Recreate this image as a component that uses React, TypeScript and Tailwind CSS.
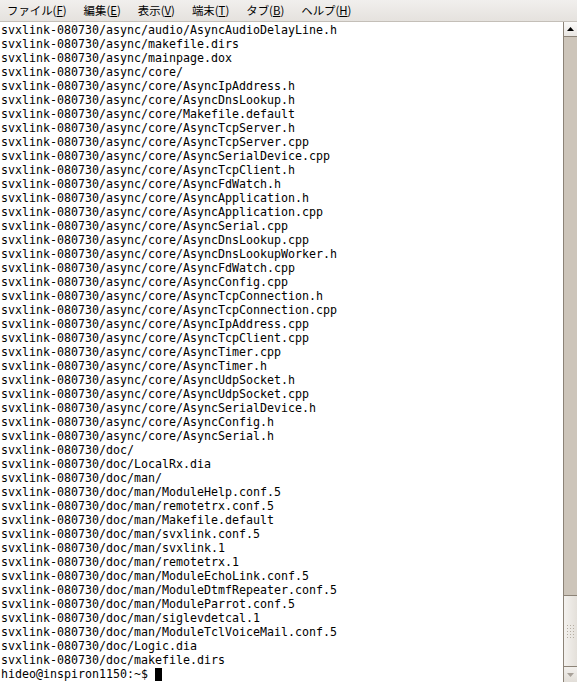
const lines = [
  "svxlink-080730/async/audio/AsyncAudioDelayLine.h",
  "svxlink-080730/async/makefile.dirs",
  "svxlink-080730/async/mainpage.dox",
  "svxlink-080730/async/core/",
  "svxlink-080730/async/core/AsyncIpAddress.h",
  "svxlink-080730/async/core/AsyncDnsLookup.h",
  "svxlink-080730/async/core/Makefile.default",
  "svxlink-080730/async/core/AsyncTcpServer.h",
  "svxlink-080730/async/core/AsyncTcpServer.cpp",
  "svxlink-080730/async/core/AsyncSerialDevice.cpp",
  "svxlink-080730/async/core/AsyncTcpClient.h",
  "svxlink-080730/async/core/AsyncFdWatch.h",
  "svxlink-080730/async/core/AsyncApplication.h",
  "svxlink-080730/async/core/AsyncApplication.cpp",
  "svxlink-080730/async/core/AsyncSerial.cpp",
  "svxlink-080730/async/core/AsyncDnsLookup.cpp",
  "svxlink-080730/async/core/AsyncDnsLookupWorker.h",
  "svxlink-080730/async/core/AsyncFdWatch.cpp",
  "svxlink-080730/async/core/AsyncConfig.cpp",
  "svxlink-080730/async/core/AsyncTcpConnection.h",
  "svxlink-080730/async/core/AsyncTcpConnection.cpp",
  "svxlink-080730/async/core/AsyncIpAddress.cpp",
  "svxlink-080730/async/core/AsyncTcpClient.cpp",
  "svxlink-080730/async/core/AsyncTimer.cpp",
  "svxlink-080730/async/core/AsyncTimer.h",
  "svxlink-080730/async/core/AsyncUdpSocket.h",
  "svxlink-080730/async/core/AsyncUdpSocket.cpp",
  "svxlink-080730/async/core/AsyncSerialDevice.h",
  "svxlink-080730/async/core/AsyncConfig.h",
  "svxlink-080730/async/core/AsyncSerial.h",
  "svxlink-080730/doc/",
  "svxlink-080730/doc/LocalRx.dia",
  "svxlink-080730/doc/man/",
  "svxlink-080730/doc/man/ModuleHelp.conf.5",
  "svxlink-080730/doc/man/remotetrx.conf.5",
  "svxlink-080730/doc/man/Makefile.default",
  "svxlink-080730/doc/man/svxlink.conf.5",
  "svxlink-080730/doc/man/svxlink.1",
  "svxlink-080730/doc/man/remotetrx.1",
  "svxlink-080730/doc/man/ModuleEchoLink.conf.5",
  "svxlink-080730/doc/man/ModuleDtmfRepeater.conf.5",
  "svxlink-080730/doc/man/ModuleParrot.conf.5",
  "svxlink-080730/doc/man/siglevdetcal.1",
  "svxlink-080730/doc/man/ModuleTclVoiceMail.conf.5",
  "svxlink-080730/doc/Logic.dia",
  "svxlink-080730/doc/makefile.dirs",
];

const menus = [
  { label: "ファイル", key: "F" },
  { label: "編集", key: "E" },
  { label: "表示", key: "V" },
  { label: "端末", key: "T" },
  { label: "タブ", key: "B" },
  { label: "ヘルプ", key: "H" },
];

function Scrollbar() {
  return (
    <div className="w-[14px] flex flex-col bg-[#cdc5ba] border-l border-[#8c8377]">
      {/* up arrow */}
      <div className="h-[15px] flex items-center justify-center bg-gradient-to-b from-[#fbfaf9] to-[#e9e6e2] border-b border-[#8c8377]">
        <svg width="7" height="4" viewBox="0 0 7 4">
          <path d="M0 4 L3.5 0 L7 4 Z" fill="#000" />
        </svg>
      </div>
      <div className="flex-1" />
      {/* thumb */}
      <div className="h-[72px] flex items-center justify-center bg-gradient-to-r from-[#f4f2ef] to-[#e4e0da] border-y border-[#8c8377]">
        <div className="grid grid-cols-3 gap-[2px]">
          {Array.from({ length: 15 }).map((_, i) => (
            <div key={i} className="w-px h-px bg-[#b5ada2]" />
          ))}
        </div>
      </div>
      {/* down arrow */}
      <div className="h-[15px] flex items-center justify-center bg-gradient-to-b from-[#f2f0ed] to-[#e2ded8]">
        <svg width="7" height="4" viewBox="0 0 7 4">
          <path d="M0 0 L7 0 L3.5 4 Z" fill="#a8a199" />
        </svg>
      </div>
    </div>
  );
}

export default function App() {
  return (
    <div className="w-[577px] h-[682px] flex flex-col bg-white overflow-hidden">
      {/* menu bar */}
      <div
        className="h-[22px] flex items-center gap-[17px] pl-[7px] pt-px bg-gradient-to-b from-[#f1efed] to-[#e5e2de] border-b border-[#c4bfb8] text-[11.4px] text-black"
        style={{ fontFamily: "'Noto Sans CJK JP', 'Noto Sans', sans-serif" }}
      >
        {menus.map((m) => (
          <span key={m.key} className="leading-none">
            {m.label}(<span className="underline">{m.key}</span>)
          </span>
        ))}
      </div>

      <div className="flex-1 flex min-h-0">
        <div
          className="flex-1 pl-px pt-[1px] text-[11.63px] leading-[14px] text-black whitespace-pre"
          style={{ fontFamily: "'DejaVu Sans Mono', 'Liberation Mono', monospace" }}
        >
          {lines.map((l, i) => (
            <div key={i}>{l}</div>
          ))}
          <div className="flex items-center">
            <span>hideo@inspiron1150:~$ </span>
            <span className="inline-block w-[7px] h-[13px] bg-black" />
          </div>
        </div>
        <Scrollbar />
      </div>
    </div>
  );
}
